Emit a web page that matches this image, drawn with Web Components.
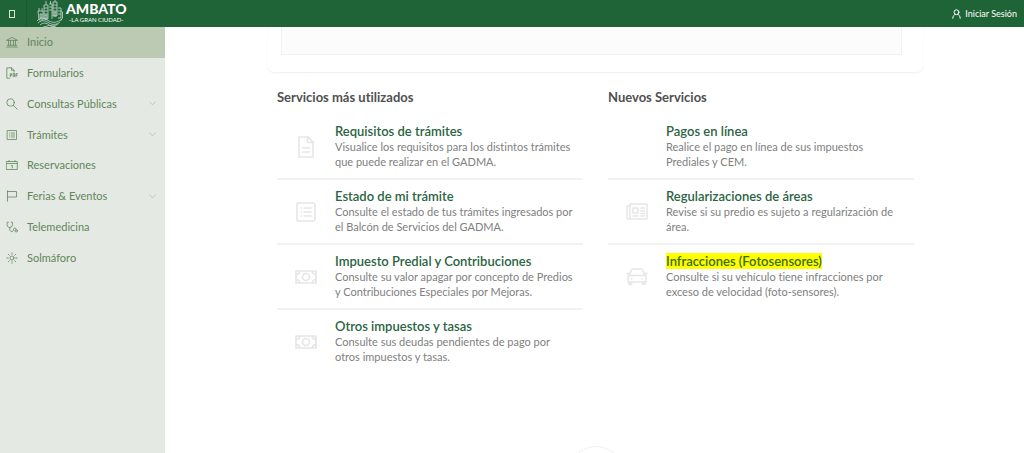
<!DOCTYPE html>
<html lang="es">
<head>
<meta charset="utf-8">
<title>Ambato - Servicios en línea</title>
<style>
body{margin:0;background:#fff;font-family:Lato,"Noto Sans",sans-serif;font-variant-ligatures:none;height:100vh;overflow:hidden}
</style>
</head>
<body>
<app-shell></app-shell>
<script>
const stroke = (w, h, vb, body, sw = 1) => `<svg width="${w}" height="${h}" viewBox="${vb}" fill="none" stroke="currentColor" stroke-width="${sw}" stroke-linejoin="round" stroke-linecap="round" aria-hidden="true">${body}</svg>`;
const n = b => stroke(12, 12, '0 0 12 12', b, 0.8);
const ICONS = {
  bank: n('<path d="M.8 4.200 6 1.300l5.200 2.900zM2.500 4.500v4.500M4.500 4.500v4.500M7.500 4.500v4.500M9.500 4.500v4.500M1.500 9.300h9M.7 11h10.600"/>'),
  pdf: n('<path d="M3.500 11.200H.8V.8h4.700l2.500 2.500v1.700M5.500 .8v2.500h2.500"/><path d="M4.300 9.800V6.700h1.400v1.600H4.300M7.200 6.700v3h1.300V6.700zM10 9.800V6.700h1.500M10 8.200h1.200"/>'),
  search: n('<circle cx="4.500" cy="4.500" r="3.700"/><path d="m7.300 7.300 4 4"/>'),
  list: n('<path d="M1.500 1.500h9v9h-9zM3.500 4h.3M5.300 4h3.200M3.500 6h.3M5.300 6h3.200M3.500 8h.3M5.300 8h3.200"/>'),
  calendar: n('<path d="M.7 2.500h10.600v8H.7zM.7 4.500h10.600M3 1.500v1M9 1.500v1M5.300 6.500h1v2.500"/>'),
  flag: n('<path d="M1.500 .8v10.500M1.500 1.500h9v5.500h-9"/>'),
  steth: n('<path d="M2.500 1.200H1.300c-.8 3 .2 5.300 2.500 5.300S7 4.200 6.300 1.200H5.200M3.800 6.500v1.700c0 3.200 3.700 3 3.700.7V8.500c0-2.200 2.700-2.200 2.700 0"/><circle cx="10.200" cy="9.800" r="1.200"/>'),
  sun: n('<circle cx="6" cy="6" r="2"/><path d="M6 .8v1.500M6 9.700v1.500M.8 6h1.500M9.700 6h1.500M2.300 2.300l1 1M8.700 8.700l1 1M9.700 2.300l-1 1M3.300 8.700l-1 1"/>'),
  user: stroke(9, 10, '0 0 10 11', '<circle cx="5" cy="3.500" r="2.700"/><path d="M.9 10.300c0-2.700 1.300-4 2.800-4.500M9.100 10.300c0-2.700-1.300-4-2.800-4.500"/>', 1.1),
  chevron: stroke(7, 5, '0 0 7 5', '<path d="m.5.8 3 3 3-3"/>', .9),
  doc: stroke(16, 22, '0 0 16 22', '<path d="M1 1h9l5 5v15H1zM9.500 1v5.500H15M4.500 12h7M4.500 16h7"/>', 1.6),
  tasks: stroke(20, 20, '0 0 20 20', '<rect x="1" y="1" width="18" height="18" rx="2"/><path d="M5 6h.3M8 6h7M5 10h.3M8 10h7M5 14h.3M8 14h7"/>', 1.6),
  money: stroke(22, 14, '0 0 22 14', '<path d="M1 1h20v12H1zM1 4.500c2 0 3.500-1.500 3.500-3.500M21 4.500c-2 0-3.500-1.500-3.500-3.500M1 9.500c2 0 3.500 1.500 3.500 3.500M21 9.500c-2 0-3.500 1.500-3.500 3.500"/><circle cx="11" cy="7" r="3.500"/>', 1.7),
  news: stroke(22, 17, '0 0 22 17', '<path d="M4 1h17v15H2.500Q1 16 1 14.500V3h3M4 1v13.500Q4 16 2.500 16M7 5h5v5H7zM15 5h3.500M15 8h3.500M15 10.500h3.500M7 13h5M15 13h3.500"/>', 1.5),
  car: stroke(22, 17, '0 0 22 17', '<path d="M3 7.500 5.500 2q.5-1 1.500-1h8q1 0 1.500 1L19 7.500M3 7.500h16q1 0 1 1V14H2V8.500q0-1 1-1M.7 5.500h2.500M18.800 5.500h2.500M3 14v2.300h2.500V14M16.500 14v2.300H19V14M5.500 10.800h.3M16.200 10.800h.3"/>', 1.6),
  none: ''
};

function define(name, render) {
  customElements.define(name, class extends HTMLElement {
    connectedCallback() {
      if (this.shadowRoot) return;
      this.attachShadow({mode: 'open'}).innerHTML = '<style>*{box-sizing:border-box}a{color:inherit;text-decoration:none}svg{display:block;flex:none}</style>' + render(this);
    }
  });
}

define('city-logo', () => `
<style>
:host{display:block}
a{display:flex;align-items:flex-start;gap:2px;color:#fff}
.castle{opacity:.75}
.words{display:flex;flex-direction:column;align-items:center;gap:2px;padding-top:3px}
b{font:900 14px/12px Lato,sans-serif}
small{font:6px/6px Lato,sans-serif}
</style>
<a href="#inicio">
<svg class="castle" width="28" height="28" viewBox="0 0 28 28" fill="none" stroke="#fff" stroke-width=".8">
<path d="M2 11h5v9H3zM3 8v3M6 8v3M8 5h4v14H8zM8 8h4M8 11h4M8 14h4M10 1v4M13 4h3v15M13 7h3M13 10h3M14.500 1v3M17 2h4v14h-4zM17 5h4M17 8h4M17 11h4M19 0v2M22 8h3v10h-3M22 11h3M22 14h3M25 11l1.500 1v6l-2 3M1 21c4-5 8-2 12 0s8 2 13-2M2 23c4-4 8-2 11 0s8 2 11-1M4 25c3-3 7-2 9 0s6 1 9-1M7 27q7-3 13 0"/>
<path d="M9 15h2v4H9zM4 14h2v4H4zM18 12h2v4h-2z" fill="#fff" fill-opacity=".3"/>
</svg>
<span class="words"><b>AMBATO</b><small>-LA GRAN CIUDAD-</small></span>
</a>`);

define('top-bar', () => `
<style>
:host{display:flex;align-items:center;justify-content:space-between;height:27px;padding-right:7px;background:#1f6437;color:#fff;overflow:hidden;flex:none}
.left{display:flex;align-items:center}
button{width:27px;height:27px;padding:0 3px 0 0;border:0;border-right:1px solid #1b5b32;background:none;display:flex;align-items:center;justify-content:center}
button span{width:6px;height:8px;border:1px solid #dce8c8}
city-logo{margin-left:9px}
.login{display:flex;align-items:center;gap:4px;font-size:9px;line-height:12px}
</style>
<div class="left"><button type="button" aria-label="Menú"><span></span></button><city-logo></city-logo></div>
<a class="login" href="#login">${ICONS.user}Iniciar Sesión</a>`);

define('nav-item', el => `
<style>
:host{display:block}
a{display:flex;align-items:center;gap:9px;height:100%;padding:0 9px 0 6px;color:#62855a;font-size:11px;line-height:14px}
:host([active]) a{background:#bccab4}
.label{flex:1}
.chev{color:#b3c3b0}
</style>
<a href="#">${ICONS[el.getAttribute('icon')]}<span class="label"><slot></slot></span>${el.hasAttribute('more') ? `<span class="chev">${ICONS.chevron}</span>` : ''}</a>`);

define('side-nav', () => `
<style>
:host{display:block;width:165px;flex:none;background:#e4eae3}
nav{display:grid;grid-auto-rows:1fr;min-height:246px}
</style>
<nav>
<nav-item icon="bank" active>Inicio</nav-item>
<nav-item icon="pdf">Formularios</nav-item>
<nav-item icon="search" more>Consultas Públicas</nav-item>
<nav-item icon="list" more>Trámites</nav-item>
<nav-item icon="calendar">Reservaciones</nav-item>
<nav-item icon="flag" more>Ferias &amp; Eventos</nav-item>
<nav-item icon="steth">Telemedicina</nav-item>
<nav-item icon="sun">Solmáforo</nav-item>
</nav>`);

define('service-item', el => `
<style>
:host{display:grid;grid-template-columns:58px 1fr;align-items:center;padding:9px 0;border-bottom:2px solid #f2f2f2}
:host(:last-of-type){border-bottom:0}
.icon{display:flex;justify-content:center;color:#e6e6e6}
h3{margin:0;font-size:13px;line-height:15px;font-weight:600;color:#2b6442}
:host([marked]) h3 a{background:#ff0;color:#3c6c10}
p{margin:0;font-size:11px;line-height:15px;color:#808080}
</style>
<span class="icon">${ICONS[el.getAttribute('icon')]}</span>
<div><h3><a href="#">${el.getAttribute('heading')}</a></h3><p><slot></slot></p></div>`);

define('service-list', el => `
<style>
:host{display:block;flex:1;min-width:0}
h2{margin:0 0 10px;font-size:13px;line-height:16px;font-weight:700;color:#505050}
</style>
<h2>${el.getAttribute('heading')}</h2><slot></slot>`);

define('banner-card', () => `
<style>
:host{display:block;box-sizing:border-box;height:45px;padding:0 21px 17px 13px;border-radius:0 0 6px 6px;box-shadow:0 1px 2px #00000012}
div{height:100%;background:#fcfcfc;border:1px solid #f1f1f1;border-top:0}
</style><div></div>`);

define('app-shell', () => `
<style>
:host{display:flex;flex-direction:column;height:100vh}
.body{display:flex;flex:1;min-height:0}
main{flex:1;overflow:hidden;padding-left:2px}
.page{max-width:655px;margin:0 auto}
.cols{display:flex;gap:25px;padding:17px 9px 0}
.ring{width:54px;height:54px;margin:73px auto 0;border:1px solid #f0f0f0;border-radius:50%}
</style>
<top-bar></top-bar>
<div class="body"><side-nav></side-nav>
<main><div class="page">
<banner-card></banner-card>
<div class="cols">
<service-list heading="Servicios más utilizados">
<service-item icon="doc" heading="Requisitos de trámites">Visualice los requisitos para los distintos trámites<br>que puede realizar en el GADMA.</service-item>
<service-item icon="tasks" heading="Estado de mi trámite">Consulte el estado de tus trámites ingresados por<br>el Balcón de Servicios del GADMA.</service-item>
<service-item icon="money" heading="Impuesto Predial y Contribuciones">Consulte su valor apagar por concepto de Predios<br>y Contribuciones Especiales por Mejoras.</service-item>
<service-item icon="money" heading="Otros impuestos y tasas">Consulte sus deudas pendientes de pago por<br>otros impuestos y tasas.</service-item>
</service-list>
<service-list heading="Nuevos Servicios">
<service-item icon="none" heading="Pagos en línea">Realice el pago en línea de sus impuestos<br>Prediales y CEM.</service-item>
<service-item icon="news" heading="Regularizaciones de áreas">Revise si su predio es sujeto a regularización de<br>área.</service-item>
<service-item icon="car" marked heading="Infracciones (Fotosensores)">Consulte si su vehículo tiene infracciones por<br>exceso de velocidad (foto-sensores).</service-item>
</service-list>
</div>
<div class="ring"></div>
</div></main></div>`);
</script>
</body>
</html>
